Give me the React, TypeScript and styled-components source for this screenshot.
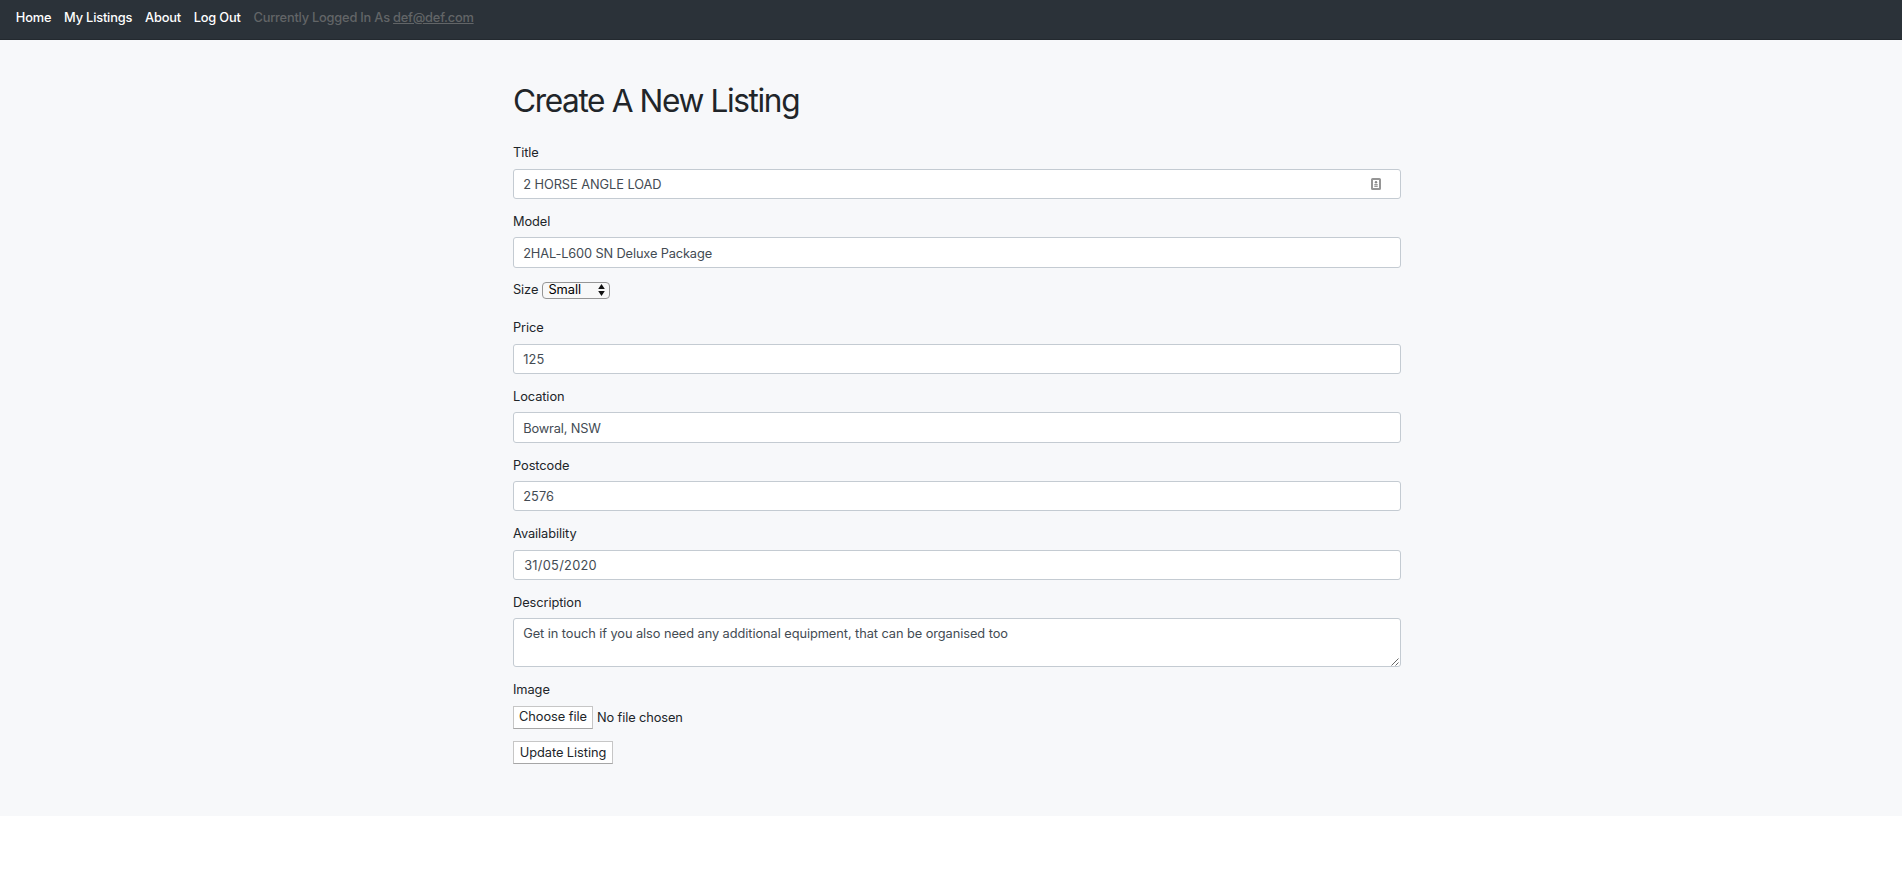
import React from "react";
import styled, { createGlobalStyle } from "styled-components";

const GlobalStyle = createGlobalStyle`
  *, *::before, *::after { box-sizing: border-box; }
  body {
    margin: 0;
    background: #fff;
    color: #212529;
    font-family: Inter, "Liberation Sans", sans-serif;
    font-size: 12.8px;
    line-height: 19.2px;
    -webkit-font-smoothing: antialiased;
  }
`;

const Navbar = styled.nav`
  display: flex;
  align-items: flex-start;
  gap: 12.8px;
  height: 40px;
  padding: 8px 15.8px 0;
  background: #2b3239;
  border-bottom: 1px solid #23292f;
  letter-spacing: -0.17px;
  white-space: nowrap;
`;

const NavLink = styled.a`
  color: #fff;
  font-weight: 500;
  text-decoration: none;
`;

const LoginStatus = styled.span`
  color: #626567;
  font-weight: 450;
  letter-spacing: -0.2px;
`;

const AccountLink = styled.a`
  color: inherit;
  text-decoration: underline;
`;

const Main = styled.main`
  height: 776px;
  padding-top: 42px;
  background: #f7f8fa;
`;

const Form = styled.form`
  width: 888px;
  margin-left: 513px;
`;

const Heading = styled.h1`
  margin: 0 0 22.8px;
  font-size: 31.6px;
  font-weight: 400;
  line-height: 38.4px;
  letter-spacing: -1.37px;
`;

const Field = styled.div`
  display: flex;
  flex-direction: column;
  margin-bottom: 12.75px;
`;

const Label = styled.label`
  height: 19.2px;
  margin-bottom: 6.3px;
  letter-spacing: -0.07px;
`;

const InputWrap = styled.div`
  position: relative;
  display: flex;
`;

const Input = styled.input<{ $spacing?: number; $indent?: number }>`
  width: 100%;
  height: 30.4px;
  padding: 1px 9.6px 0 ${(p) => p.$indent ?? 9.2}px;
  border: 1px solid #c4cbd2;
  border-radius: 3px;
  outline: 0;
  background: #fff;
  color: #434b53;
  font: inherit;
  letter-spacing: ${(p) => p.$spacing ?? 0}px;
`;

const TextArea = styled.textarea`
  display: block;
  width: 100%;
  height: 49px;
  padding: 4.8px 9.2px;
  border: 1px solid #c4cbd2;
  border-radius: 3px;
  outline: 0;
  background: #fff;
  color: #434b53;
  font: inherit;
  letter-spacing: -0.065px;
  resize: none;
`;

const Autofill = styled.svg`
  position: absolute;
  top: 9px;
  right: 20px;
`;

const Grip = styled.svg`
  position: absolute;
  right: 2px;
  bottom: 1px;
`;

const SizeRow = styled.div`
  display: flex;
  align-items: flex-start;
  gap: 4px;
  height: 37.8px;
  letter-spacing: -0.1px;
`;

const SizeLabel = styled.span`
  width: 25.2px;
`;

const SelectBox = styled.button`
  display: flex;
  align-items: center;
  justify-content: space-between;
  width: 68px;
  height: 17px;
  margin-top: 1.5px;
  padding: 0 4px 1px 5.2px;
  border: 1px solid #959595;
  border-radius: 4px;
  background: #f8f8f8;
  color: #000;
  font: inherit;
  line-height: 15px;
`;

const PlainButton = styled.button<{ $width: number; $lift?: number }>`
  width: ${(p) => p.$width}px;
  height: 23px;
  padding: 0 0 ${(p) => p.$lift ?? 0}px;
  border: 1px solid #c6c6c6;
  border-bottom-color: #a6a6a6;
  background: #fff;
  color: #212529;
  font: inherit;
  letter-spacing: -0.05px;
  white-space: nowrap;
`;

const ImageField = styled.div`
  display: flex;
  flex-direction: column;
  margin-bottom: 12px;
`;

const FileRow = styled.div`
  display: flex;
  align-items: center;
  gap: 4px;
  margin-top: 0.3px;
  letter-spacing: -0.1px;
`;

type TextFieldProps = {
  id: string;
  label: string;
  value: string;
  spacing?: number;
  indent?: number;
  children?: React.ReactNode;
};

function TextField({ id, label, value, spacing, indent, children }: TextFieldProps) {
  return (
    <Field>
      <Label htmlFor={id}>{label}</Label>
      <InputWrap>
        <Input id={id} defaultValue={value} $spacing={spacing} $indent={indent} />
        {children}
      </InputWrap>
    </Field>
  );
}

export default function App() {
  return (
    <>
      <GlobalStyle />
      <Navbar>
        <NavLink>Home</NavLink>
        <NavLink>My Listings</NavLink>
        <NavLink>About</NavLink>
        <NavLink>Log Out</NavLink>
        <LoginStatus>
          Currently Logged In As <AccountLink>def@def.com</AccountLink>
        </LoginStatus>
      </Navbar>
      <Main>
        <Form>
          <Heading>Create A New Listing</Heading>
          <TextField id="title" label="Title" value="2 HORSE ANGLE LOAD" spacing={-0.05}>
            <Autofill width="10" height="12" viewBox="0 0 10 12" fill="none">
              <rect x="1" y="1" width="8" height="10" rx="0.6" stroke="#959595" strokeWidth="2" />
              <circle cx="5" cy="4.2" r="1.2" fill="#858585" />
              <path d="M3.3 6.6h3.4M3.3 8.4h3.4" stroke="#999" strokeWidth="1.1" />
            </Autofill>
          </TextField>
          <TextField id="model" label="Model" value="2HAL-L600 SN Deluxe Package" spacing={-0.13} />
          <SizeRow>
            <SizeLabel>Size</SizeLabel>
            <SelectBox type="button">
              Small
              <svg width="7" height="12" viewBox="0 0 7 12" fill="#111">
                <path d="M3.5 0.1 6.8 5H0.2ZM3.5 11.9 6.8 7H0.2Z" />
              </svg>
            </SelectBox>
          </SizeRow>
          <TextField id="price" label="Price" value="125" spacing={0.15} />
          <TextField id="location" label="Location" value="Bowral, NSW" spacing={-0.15} />
          <TextField id="postcode" label="Postcode" value="2576" spacing={0.1} />
          <TextField id="availability" label="Availability" value="31/05/2020" spacing={0.28} indent={10.2} />
          <Field>
            <Label htmlFor="description">Description</Label>
            <InputWrap>
              <TextArea
                id="description"
                defaultValue="Get in touch if you also need any additional equipment, that can be organised too"
              />
              <Grip width="8" height="8" viewBox="0 0 8 8" stroke="#555" strokeWidth="0.9">
                <path d="M0.5 7.5l7-7M4.5 7.5l3-3" />
              </Grip>
            </InputWrap>
          </Field>
          <ImageField>
            <Label as="div">Image</Label>
            <FileRow>
              <PlainButton type="button" $width={80} $lift={1}>Choose file</PlainButton>
              <span>No file chosen</span>
            </FileRow>
          </ImageField>
          <PlainButton type="button" $width={100}>Update Listing</PlainButton>
        </Form>
      </Main>
    </>
  );
}
